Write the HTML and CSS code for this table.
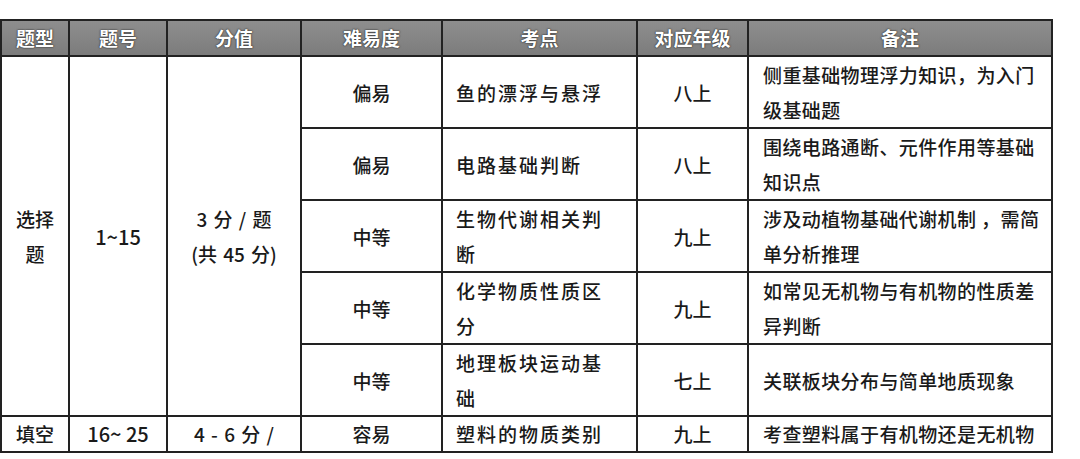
FILE: index.html
```
<!DOCTYPE html>
<html lang="zh">
<head>
<meta charset="utf-8">
<link rel="stylesheet" href="styles.css">
</head>
<body>
<table class="exam">
<colgroup>
<col class="c1"><col class="c2"><col class="c3"><col class="c4"><col class="c5"><col class="c6"><col class="c7">
</colgroup>
<thead>
<tr class="head">
<th>题型</th><th>题号</th><th>分值</th><th>难易度</th><th>考点</th><th>对应年级</th><th>备注</th>
</tr>
</thead>
<tbody>
<tr class="row">
<td rowspan="5" class="center">选择<br>题</td>
<td rowspan="5" class="center num">1~15</td>
<td rowspan="5" class="center score">3 分 / 题<br>(共 45 分)</td>
<td class="center">偏易</td>
<td class="point">鱼的漂浮与悬浮</td>
<td class="center">八上</td>
<td class="note">侧重基础物理浮力知识，为入门<br>级基础题</td>
</tr>
<tr class="row">
<td class="center">偏易</td>
<td class="point">电路基础判断</td>
<td class="center">八上</td>
<td class="note">围绕电路通断、元件作用等基础<br>知识点</td>
</tr>
<tr class="row">
<td class="center">中等</td>
<td class="point">生物代谢相关判<br>断</td>
<td class="center">九上</td>
<td class="note">涉及动植物基础代谢机制 ，需简<br>单分析推理</td>
</tr>
<tr class="row">
<td class="center">中等</td>
<td class="point">化学物质性质区<br>分</td>
<td class="center">九上</td>
<td class="note">如常见无机物与有机物的性质差<br>异判断</td>
</tr>
<tr class="row">
<td class="center">中等</td>
<td class="point">地理板块运动基<br>础</td>
<td class="center">七上</td>
<td class="note">关联板块分布与简单地质现象</td>
</tr>
<tr class="last">
<td class="center">填空</td>
<td class="center num">16~ 25</td>
<td class="center score">4 - 6 分 /</td>
<td class="center">容易</td>
<td class="point">塑料的物质类别</td>
<td class="center">九上</td>
<td class="note">考查塑料属于有机物还是无机物</td>
</tr>
</tbody>
</table>
</body>
</html>
```
FILE: styles.css
```
html, body {
  margin: 0;
  padding: 0;
  background: #ffffff;
}
body {
  padding-top: 19px;
  font-family: "Noto Sans CJK SC", "Noto Sans", sans-serif;
  color: #1a1a1a;
}
.exam {
  border-collapse: collapse;
  table-layout: fixed;
  width: 1051px;
  font-size: 19px;
  font-weight: 500;
}
.c1 { width: 68px; }
.c2 { width: 98px; }
.c3 { width: 134px; }
.c4 { width: 141px; }
.c5 { width: 195px; }
.c6 { width: 111px; }
.c7 { width: 304px; }
.exam th,
.exam td {
  border: 2px solid #222222;
  padding: 0;
  vertical-align: middle;
}
.head th {
  height: 34px;
  background: linear-gradient(#8e8e8e, #7c7c7c);
  color: #ffffff;
  font-weight: bold;
  font-size: 19px;
  text-shadow: 0 0 2px #2a2a2a, 0 0 1px #2a2a2a;
  line-height: 34px;
}
.row td {
  height: 70px;
  line-height: 35px;
}
.last td {
  height: 34px;
  line-height: 34px;
}
.center {
  text-align: center;
}
.num {
  font-size: 20px;
}
.score {
  word-spacing: 2px;
}
.point {
  text-align: left;
  padding-left: 13px !important;
  letter-spacing: 2px;
}
.note {
  text-align: left;
  padding-left: 14px !important;
  letter-spacing: 0.4px;
}
```
